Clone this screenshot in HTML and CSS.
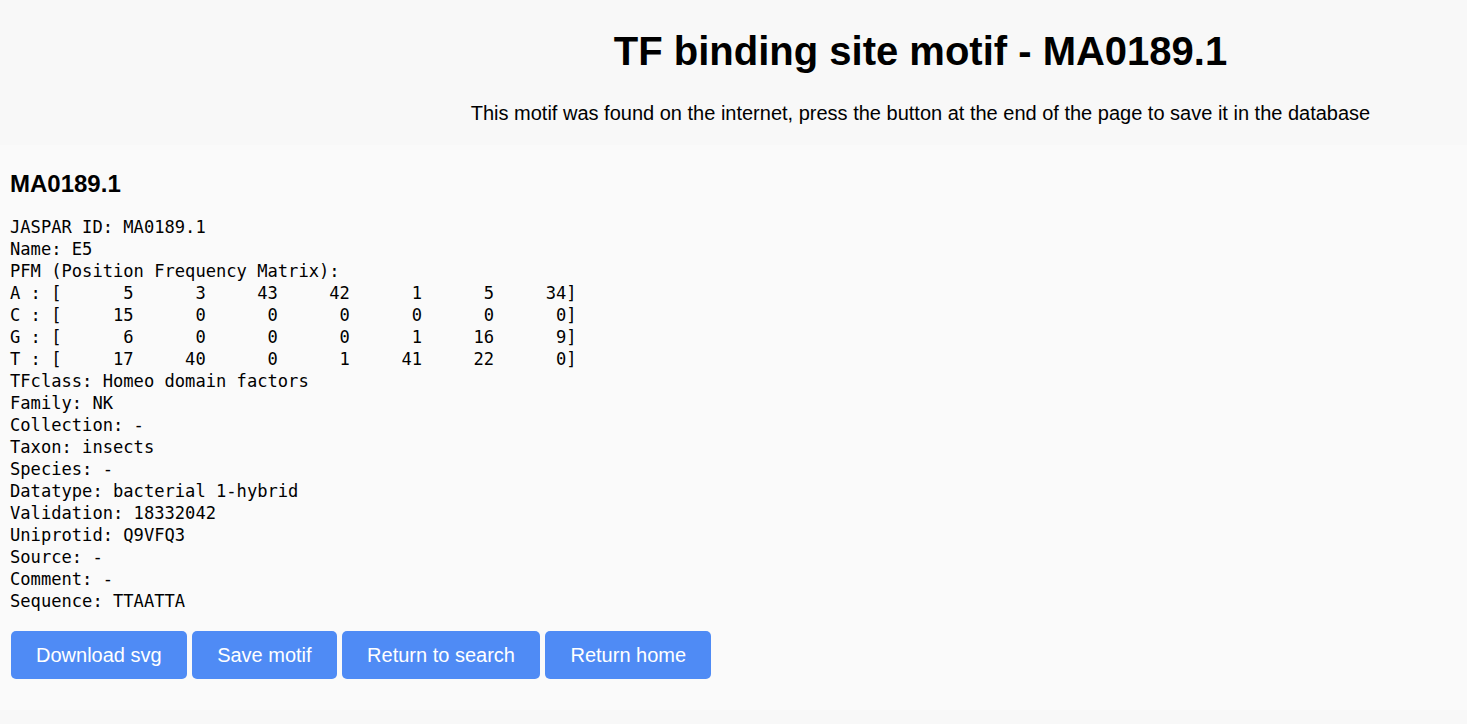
FILE: index.html
```html
<!DOCTYPE html>
<html lang="en">
<head>
<meta charset="utf-8">
<title>TF binding site motif - MA0189.1</title>
<link rel="stylesheet" href="styles.css">
</head>
<body>
<header class="page-header">
  <h1 class="title">TF binding site motif - MA0189.1</h1>
  <p class="subtitle">This motif was found on the internet, press the button at the end of the page to save it in the database</p>
</header>
<main class="motif">
  <h2 class="motif-id">MA0189.1</h2>
<pre class="motif-data">JASPAR ID: MA0189.1
Name: E5
PFM (Position Frequency Matrix):
A : [      5      3     43     42      1      5     34]
C : [     15      0      0      0      0      0      0]
G : [      6      0      0      0      1     16      9]
T : [     17     40      0      1     41     22      0]
TFclass: Homeo domain factors
Family: NK
Collection: -
Taxon: insects
Species: -
Datatype: bacterial 1-hybrid
Validation: 18332042
Uniprotid: Q9VFQ3
Source: -
Comment: -
Sequence: TTAATTA</pre>
  <div class="actions">
    <button class="btn" type="button">Download svg</button>
    <button class="btn" type="button">Save motif</button>
    <button class="btn" type="button">Return to search</button>
    <button class="btn" type="button">Return home</button>
  </div>
</main>
</body>
</html>
```
FILE: styles.css
```css
html, body {
  margin: 0;
  padding: 0;
}
body {
  background: #f8f8f8;
  color: #000;
  font-family: "Liberation Sans", Arial, sans-serif;
}
.page-header {
  padding: 28px 0 20px 374px;
  text-align: center;
}
.title {
  margin: 0;
  font-size: 40px;
  line-height: 46px;
  font-weight: bold;
}
.subtitle {
  margin: 28px 0 0;
  font-size: 20px;
  line-height: 23px;
}
.motif {
  background: #fafafa;
  padding: 25px 10px 31px;
}
.motif-id {
  margin: 0;
  font-size: 24px;
  line-height: 28px;
  font-weight: bold;
}
.motif-data {
  margin: 18px 0 0;
  font-family: "DejaVu Sans Mono", "Liberation Mono", monospace;
  font-size: 17.12px;
  line-height: 22px;
  color: #000;
}
.actions {
  display: flex;
  gap: 5.5px;
  margin: 19px 0 0 1px;
}
.btn {
  background: #4f8bf5;
  color: #fff;
  border: none;
  border-radius: 5px;
  padding: 12px 25px;
  font-family: "Liberation Sans", Arial, sans-serif;
  font-size: 20px;
  line-height: 24px;
  cursor: pointer;
}
```
